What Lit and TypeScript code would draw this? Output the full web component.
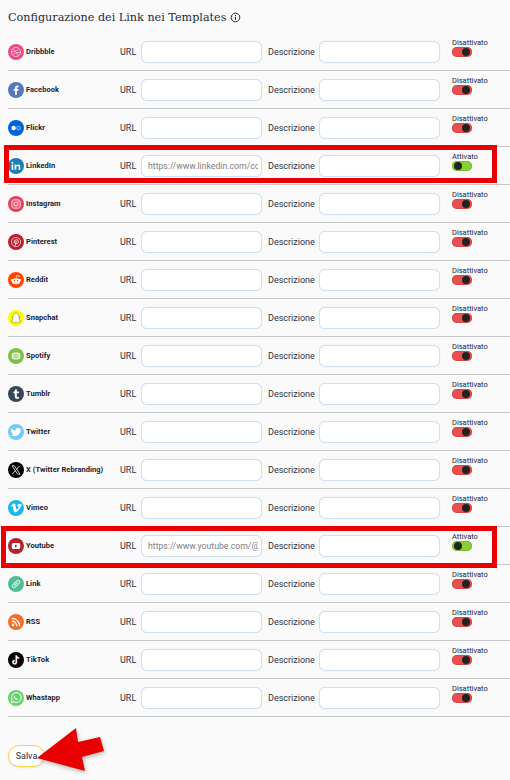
import { LitElement, html, css, svg } from "lit";
import { customElement } from "lit/decorators.js";

type Net = { name: string; color: string; icon: unknown; url?: string };

const nets: Net[] = [
  { name: "Dribbble", color: "#ea4c89", icon: svg`<circle cx="8" cy="8" r="4.6" fill="none" stroke="#fff" stroke-width=".8" opacity=".75"/><path d="M5.200 4.800C7.500 7 9.500 9.500 10 12.200M10.800 4.800C9 6.800 6.800 7.800 3.800 7.800M4.800 11C6.500 9 9 8 12.200 8.600" fill="none" stroke="#fff" stroke-width=".7" opacity=".75"/>` },
  { name: "Facebook", color: "#5578bd", icon: svg`<path d="M8.900 13V8.700h1.500l.2-1.700H8.900V6c0-.5.2-.8.8-.8h.9V3.700c-.3 0-.8-.1-1.300-.1-1.400 0-2.200.8-2.200 2.200V7H5.700v1.700h1.400V13z" fill="#fff"/>` },
  { name: "Flickr", color: "#0063dc", icon: svg`<circle cx="5.600" cy="8" r="2.200" fill="#fff"/><circle cx="10.500" cy="8" r="1.800" fill="none" stroke="#fff" stroke-width=".7" opacity=".8"/>` },
  { name: "LinkedIn", color: "#1a7fb5", url: "https://www.linkedin.com/company/", icon: svg`<rect x="3.600" y="6.600" width="1.700" height="5.200" fill="#fff"/><circle cx="4.450" cy="4.800" r="1" fill="#fff"/><path d="M6.600 6.600h1.600v.8c.4-.6 1-1 1.900-1 1.600 0 2.200 1 2.200 2.600v2.800h-1.700V9.300c0-.8-.3-1.300-1-1.300-.8 0-1.300.5-1.300 1.400v2.400H6.600z" fill="#fff"/>` },
  { name: "Instagram", color: "#e4405f", icon: svg`<rect x="3.800" y="3.800" width="8.400" height="8.400" rx="2.200" fill="#fff" fill-opacity=".2" stroke="#fff" stroke-width="1" opacity=".75"/><circle cx="8" cy="8" r="2" fill="none" stroke="#fff" stroke-width="1" opacity=".75"/><circle cx="10.500" cy="5.500" r=".5" fill="#fff"/>` },
  { name: "Pinterest", color: "#bd1f2d", icon: svg`<circle cx="8" cy="8" r="4.600" fill="none" stroke="#fff" stroke-width=".8" opacity=".85"/><path d="M6.400 9.300C5.500 7.500 6.600 5.700 8.300 5.700c1.500 0 2.200 1.100 2 2.300-.2 1.300-1.400 2-2.200 1.300M8.200 6.900l-1 4.600" fill="none" stroke="#fff" stroke-width=".9"/>` },
  { name: "Reddit", color: "#ff4500", icon: svg`<ellipse cx="8" cy="9.200" rx="4.200" ry="3" fill="#fff"/><circle cx="3.900" cy="8" r="1" fill="#fff"/><circle cx="12.100" cy="8" r="1" fill="#fff"/><path d="M8 6.200l.7-2.600 2 .5" fill="none" stroke="#fff" stroke-width=".6"/><circle cx="11" cy="4.200" r=".7" fill="#fff"/><circle cx="6.500" cy="8.800" r=".7" fill="#ff4500"/><circle cx="9.500" cy="8.800" r=".7" fill="#ff4500"/><path d="M6.400 10.600c1 .6 2.200.6 3.200 0" fill="none" stroke="#ff4500" stroke-width=".5"/>` },
  { name: "Snapchat", color: "#fffc00", icon: svg`<path d="M8 3c1.800 0 2.900 1.300 2.900 3v1.400l1 .2c.2.4-.5.8-1 1 .3 1 1 1.700 2 2-.2.5-1 .5-1.400.7l-.3.7c-1 0-1.600.8-3.200.8s-2.200-.8-3.200-.8l-.3-.7c-.4-.2-1.200-.2-1.400-.7 1-.3 1.700-1 2-2-.5-.2-1.200-.6-1-1l1-.2V6c0-1.700 1.100-3 2.900-3z" fill="#fff" stroke="#444" stroke-width=".4"/>` },
  { name: "Spotify", color: "#84bd48", icon: svg`<rect x="3.600" y="4.400" width="8.800" height="7.200" rx="3" fill="#fff" opacity=".8"/><path d="M5.200 6.700c2-.5 3.800-.3 5.600.5M5.500 8.200c1.700-.4 3.200-.2 4.800.5M5.800 9.600c1.400-.3 2.600-.2 3.900.4" fill="none" stroke="#84bd48" stroke-width=".7"/>` },
  { name: "Tumblr", color: "#35465c", icon: svg`<path d="M8.800 3.200v2.300h2v1.700h-2v2.900c0 .8.4 1 1 1 .4 0 .8-.1 1.100-.3v1.600c-.5.3-1.100.4-1.800.4-1.500 0-2.300-.9-2.300-2.400V7.200H5.400V5.800c1.100-.3 1.700-1.300 1.800-2.600z" fill="#fff"/>` },
  { name: "Twitter", color: "#76c8f5", icon: svg`<path d="M12.800 5c-.4.2-.8.3-1.200.3.4-.3.8-.7.9-1.200-.4.3-.8.4-1.300.5a2.100 2.100 0 0 0-3.600 1.900C5.800 6.400 4.300 5.600 3.300 4.300c-.6 1-.3 2.200.6 2.800-.3 0-.6-.1-.9-.3 0 1 .7 1.900 1.700 2.100-.3.1-.6.1-.9 0 .3.9 1.100 1.400 2 1.500-.9.7-2 1-3 .9 3 1.900 9.600.9 9.800-5.500.4-.2.7-.5 1-.8z" fill="#fff"/>` },
  { name: "X (Twitter Rebranding)", color: "#000", icon: svg`<path d="M4 3.800h2.400l5.600 8.400H9.600zM11.600 3.800L4.300 12.200" fill="none" stroke="#ccc" stroke-width="1"/>` },
  { name: "Vimeo", color: "#1ab7ea", icon: svg`<path d="M12.900 5.700c-.1 1-.8 2.300-2.100 4-1.400 1.800-2.500 2.700-3.500 2.700-.6 0-1.100-.6-1.500-1.700L5 7.700c-.3-1.100-.6-1.700-1-1.700l-.8.5-.5-.6 1.600-1.400c.7-.6 1.200-.9 1.600-1 .9-.1 1.400.5 1.600 1.800.2 1.400.4 2.300.5 2.600.3 1.100.5 1.700.9 1.700.2 0 .6-.4 1-1.100.5-.7.7-1.300.8-1.700 0-.6-.2-.9-.8-.9-.3 0-.5.1-.8.2.5-1.700 1.500-2.500 3-2.400 1.100 0 1.600.7 1.600 2z" fill="#fff"/>` },
  { name: "Youtube", color: "#b9222c", url: "https://www.youtube.com/@channel", icon: svg`<rect x="3.800" y="5" width="8.400" height="6" rx="1.500" fill="#fff"/><path d="M7 6.500v3L9.600 8z" fill="#b9222c"/>` },
  { name: "Link", color: "#52bd95", icon: svg`<path d="M6.700 9.300l2.600-2.600M6.500 7.200L4.700 9a1.650 1.650 0 0 0 2.300 2.300l1.800-1.800M9.500 8.800l1.800-1.800A1.650 1.650 0 0 0 9 4.700L7.200 6.500" fill="none" stroke="#fff" stroke-width="1.100" opacity=".75" stroke-linecap="round"/>` },
  { name: "RSS", color: "#f26f2a", icon: svg`<circle cx="5.100" cy="10.900" r="1.300" fill="#fff"/><path d="M3.800 7.200a5 5 0 0 1 5 5M3.800 4.400a7.800 7.800 0 0 1 7.800 7.800" fill="none" stroke="#fff" stroke-width="1.300"/>` },
  { name: "TikTok", color: "#000", icon: svg`<path d="M8.400 3.500v6.700a1.700 1.700 0 1 1-1.700-1.700M8.400 3.500c.2 1.500 1.200 2.500 2.800 2.700" fill="none" stroke="#25f4ee" stroke-width="1.200" transform="translate(-.4 -.3)"/><path d="M8.400 3.500v6.700a1.700 1.700 0 1 1-1.700-1.700M8.400 3.500c.2 1.500 1.200 2.500 2.800 2.700" fill="none" stroke="#fe2c55" stroke-width="1.200" transform="translate(.4 .3)"/><path d="M8.400 3.500v6.700a1.700 1.700 0 1 1-1.700-1.700M8.400 3.500c.2 1.500 1.200 2.500 2.800 2.700" fill="none" stroke="#fff" stroke-width="1.100"/>` },
  { name: "Whastapp", color: "#67d36f", icon: svg`<path d="M3.300 12.700l.8-2.800a4.900 4.900 0 1 1 1.900 1.900z" fill="none" stroke="#fff" stroke-width="1"/><path d="M6.300 5.700c-.9.700-.6 1.900.4 3 1 1.100 2.200 1.600 3 .9l.3-.7-1.100-.7-.5.500c-.6-.2-1.200-.8-1.500-1.400l.5-.5-.7-1.100z" fill="#fff"/>` },
];

@customElement("app-root")
export class AppRoot extends LitElement {
  static styles = css`
    :host { display: block; position: relative; width: 510px; height: 780px; overflow: hidden; background: #fafafa; color: #1a2335; font-family: Roboto, "Liberation Sans", sans-serif; }
    h1 { margin: 0; padding: 9px 0 0 8px; height: 24px; display: flex; align-items: flex-start; gap: 4px; font: 400 11.2px/17px "DejaVu Serif", serif; color: #1f2a3c; }
    .info { margin-top: 3px; flex: none; }
    .list { margin: 0 0 0 8px; }
    .row { display: grid; grid-template-columns: 112px 21px 121px 57px 121px auto; align-items: center; height: 37px; border-bottom: 1px solid #c8c8c8; }
    .net { display: flex; align-items: center; gap: 2px; font: 700 7.5px/10px Roboto, sans-serif; letter-spacing: .05px; white-space: nowrap; }
    .ico { width: 16px; height: 16px; flex: none; display: block; }
    .lbl { font: 400 9px/12px Roboto, sans-serif; color: #2a3347; }
    input { box-sizing: border-box; width: 121px; height: 22px; padding: 0 3px 0 6px; border: 1px solid #d3e0ee; border-radius: 6px; background: #fff; font: 400 8.7px Roboto, sans-serif; color: #808080; outline: none; box-shadow: 0 0 1px #d3e0ee; }
    .desc { margin-left: 6px; }
    .state { margin-left: 12px; display: flex; flex-direction: column; font: 400 7.5px/9px Roboto, sans-serif; position: relative; top: -4px; }
    .sw { width: 20px; height: 10px; border-radius: 5px; background: #e85050; display: flex; justify-content: flex-end; align-items: center; padding: 0 2px; box-sizing: border-box; box-shadow: inset 0 0 0 .5px #c93a3a; }
    .sw i { width: 8px; height: 8px; border-radius: 50%; background: #222; display: block; }
    .sw.on { background: #88cf35; justify-content: flex-start; box-shadow: inset 0 0 0 .5px #6aa928; }
    .save { margin: 28px 0 0 8px; box-sizing: border-box; display: block; width: 37px; height: 22px; border: 1px solid #f5d545; border-radius: 11px; background: #fff; padding: 0; font: 400 9px Roboto, sans-serif; color: #2a3347; box-shadow: 0 1px 2px rgba(0,0,0,.08); }
    .mark { position: absolute; left: 4px; width: 493px; height: 38px; box-sizing: border-box; border: 5px solid #e90000; pointer-events: none; }
    .m1 { top: 145px; }
    .m2 { top: 526px; left: 1px; width: 496px; height: 42px; }
    .arrow { position: absolute; left: 30px; top: 722px; filter: drop-shadow(1px 2px 2px rgba(0,0,0,.25)); }
  `;

  private row(n: Net) {
    return html`<div class="row">
      <div class="net"><svg class="ico" viewBox="0 0 16 16"><circle cx="8" cy="8" r="8" fill=${n.color}></circle>${n.icon}</svg><span>${n.name}</span></div>
      <div class="lbl">URL</div>
      <input .value=${n.url ?? ""} />
      <div class="lbl desc">Descrizione</div>
      <input />
      <div class="state">${n.url ? "Attivato" : "Disattivato"}<div class="sw ${n.url ? "on" : ""}"><i></i></div></div>
    </div>`;
  }

  render() {
    return html`
      <h1><span>Configurazione dei Link nei Templates</span>
        <svg class="info" width="11" height="11" viewBox="0 0 11 11"><circle cx="5.500" cy="5.500" r="4.300" fill="none" stroke="#1f2a3c" stroke-width="1"/><rect x="5" y="4.800" width="1" height="3.200" fill="#1f2a3c"/><rect x="5" y="3" width="1" height="1" fill="#1f2a3c"/></svg>
      </h1>
      <div class="list">${nets.map((n) => this.row(n))}</div>
      <button class="save">Salva</button>
      <div class="mark m1"></div>
      <div class="mark m2"></div>
      <svg class="arrow" width="80" height="56" viewBox="30 722 80 56"><polygon points="37,758 76,728 78,742 100,737 104,751 82,757 85,771" fill="#e90000"/></svg>
    `;
  }
}
